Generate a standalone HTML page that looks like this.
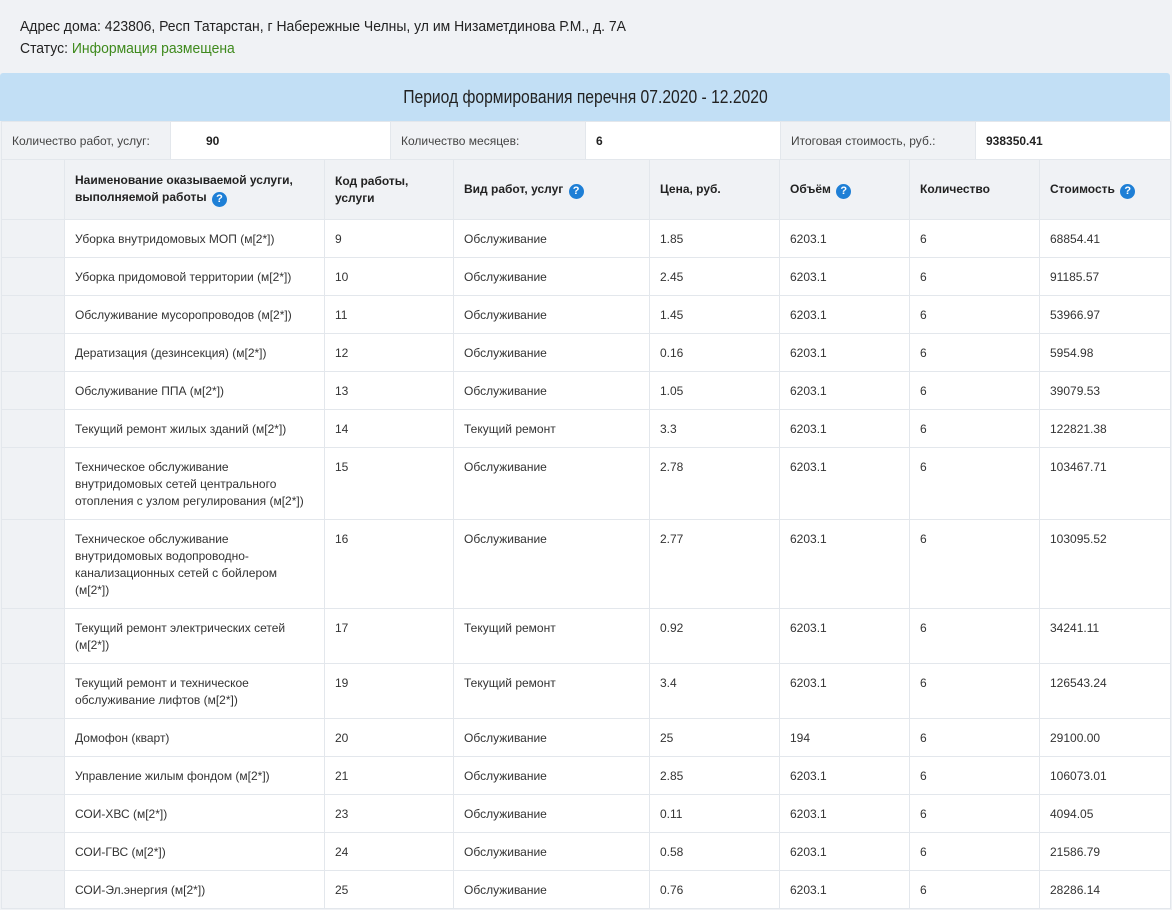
<!DOCTYPE html>
<html><head><meta charset="utf-8">
<style>
*{box-sizing:border-box;margin:0;padding:0}
body{width:1172px;height:910px;overflow:hidden;background:#f0f2f5;font-family:"Liberation Sans",Arial,sans-serif;color:#333}
.top{position:absolute;left:20px;top:16px;font-size:15px;line-height:22px;color:#222;transform:scaleX(0.93);transform-origin:0 0;white-space:nowrap}
.top .g{color:#3f8a1d}
.period{position:absolute;left:0;top:73px;width:1170px;height:48px;background:#c2dff5;border-radius:3px 3px 0 0;text-align:center;line-height:48px;color:#222}
.period span{display:inline-block;font-size:18px;transform:scaleX(0.87);white-space:nowrap}
table{position:absolute;left:1px;border-collapse:collapse;table-layout:fixed;font-family:"Liberation Sans",Arial,sans-serif;font-size:12px}
.sum{top:121px;width:1169px}
.sum td{height:38px;border:1px solid #e3e7ec;padding:0 10px;vertical-align:middle}
.sum td.l{background:#f0f2f5;color:#444}
.sum td.v{background:#fff;font-weight:bold;color:#222;padding-left:35px}
.main{top:159px;width:1169px}
.main td,.main th{border:1px solid #e3e7ec;padding:11px 10px 0 10px;vertical-align:top;line-height:17px;text-align:left}
.main th{background:#f0f2f5;height:60px;font-weight:bold;color:#222;vertical-align:middle;padding-top:0}
.main td{background:#fff}
.main td.e,.main th.e{background:#f0f2f5}
.q{display:inline-block;width:15px;height:15px;border-radius:50%;background:#1e7fd6;color:#fff;font-size:11px;font-weight:bold;line-height:15px;text-align:center;vertical-align:-1px;margin-left:2px}
</style></head><body>
<div class="top">Адрес дома: 423806, Респ Татарстан, г Набережные Челны, ул им Низаметдинова Р.М., д. 7А<br>Статус: <span class="g">Информация размещена</span></div>
<div class="period"><span>Период формирования перечня 07.2020 - 12.2020</span></div>
<table class="sum"><colgroup><col style="width:169px"><col style="width:220px"><col style="width:195px"><col style="width:195px"><col style="width:195px"><col style="width:195px"></colgroup>
<tr><td class="l">Количество работ, услуг:</td><td class="v">90</td><td class="l">Количество месяцев:</td><td class="v" style="padding-left:10px">6</td><td class="l">Итоговая стоимость, руб.:</td><td class="v" style="padding-left:10px">938350.41</td></tr></table>
<table class="main"><colgroup><col style="width:63px"><col style="width:260px"><col style="width:129px"><col style="width:196px"><col style="width:130px"><col style="width:130px"><col style="width:130px"><col style="width:131px"></colgroup>
<tr><th class="e"></th><th>Наименование оказываемой услуги,<br>выполняемой работы <span class="q">?</span></th><th>Код работы,<br>услуги</th><th>Вид работ, услуг <span class="q">?</span></th><th>Цена, руб.</th><th>Объём <span class="q">?</span></th><th>Количество</th><th>Стоимость <span class="q">?</span></th></tr>
<tr style="height:38px"><td class="e"></td><td>Уборка внутридомовых МОП (м[2*])</td><td>9</td><td>Обслуживание</td><td>1.85</td><td>6203.1</td><td>6</td><td>68854.41</td></tr>
<tr style="height:38px"><td class="e"></td><td>Уборка придомовой территории (м[2*])</td><td>10</td><td>Обслуживание</td><td>2.45</td><td>6203.1</td><td>6</td><td>91185.57</td></tr>
<tr style="height:38px"><td class="e"></td><td>Обслуживание мусоропроводов (м[2*])</td><td>11</td><td>Обслуживание</td><td>1.45</td><td>6203.1</td><td>6</td><td>53966.97</td></tr>
<tr style="height:38px"><td class="e"></td><td>Дератизация (дезинсекция) (м[2*])</td><td>12</td><td>Обслуживание</td><td>0.16</td><td>6203.1</td><td>6</td><td>5954.98</td></tr>
<tr style="height:38px"><td class="e"></td><td>Обслуживание ППА (м[2*])</td><td>13</td><td>Обслуживание</td><td>1.05</td><td>6203.1</td><td>6</td><td>39079.53</td></tr>
<tr style="height:38px"><td class="e"></td><td>Текущий ремонт жилых зданий (м[2*])</td><td>14</td><td>Текущий ремонт</td><td>3.3</td><td>6203.1</td><td>6</td><td>122821.38</td></tr>
<tr style="height:72px"><td class="e"></td><td>Техническое обслуживание<br>внутридомовых сетей центрального<br>отопления с узлом регулирования (м[2*])</td><td>15</td><td>Обслуживание</td><td>2.78</td><td>6203.1</td><td>6</td><td>103467.71</td></tr>
<tr style="height:89px"><td class="e"></td><td>Техническое обслуживание<br>внутридомовых водопроводно-<br>канализационных сетей с бойлером<br>(м[2*])</td><td>16</td><td>Обслуживание</td><td>2.77</td><td>6203.1</td><td>6</td><td>103095.52</td></tr>
<tr style="height:55px"><td class="e"></td><td>Текущий ремонт электрических сетей<br>(м[2*])</td><td>17</td><td>Текущий ремонт</td><td>0.92</td><td>6203.1</td><td>6</td><td>34241.11</td></tr>
<tr style="height:55px"><td class="e"></td><td>Текущий ремонт и техническое<br>обслуживание лифтов (м[2*])</td><td>19</td><td>Текущий ремонт</td><td>3.4</td><td>6203.1</td><td>6</td><td>126543.24</td></tr>
<tr style="height:38px"><td class="e"></td><td>Домофон (кварт)</td><td>20</td><td>Обслуживание</td><td>25</td><td>194</td><td>6</td><td>29100.00</td></tr>
<tr style="height:38px"><td class="e"></td><td>Управление жилым фондом (м[2*])</td><td>21</td><td>Обслуживание</td><td>2.85</td><td>6203.1</td><td>6</td><td>106073.01</td></tr>
<tr style="height:38px"><td class="e"></td><td>СОИ-ХВС (м[2*])</td><td>23</td><td>Обслуживание</td><td>0.11</td><td>6203.1</td><td>6</td><td>4094.05</td></tr>
<tr style="height:38px"><td class="e"></td><td>СОИ-ГВС (м[2*])</td><td>24</td><td>Обслуживание</td><td>0.58</td><td>6203.1</td><td>6</td><td>21586.79</td></tr>
<tr style="height:38px"><td class="e"></td><td>СОИ-Эл.энергия (м[2*])</td><td>25</td><td>Обслуживание</td><td>0.76</td><td>6203.1</td><td>6</td><td>28286.14</td></tr>
</table>
</body></html>
